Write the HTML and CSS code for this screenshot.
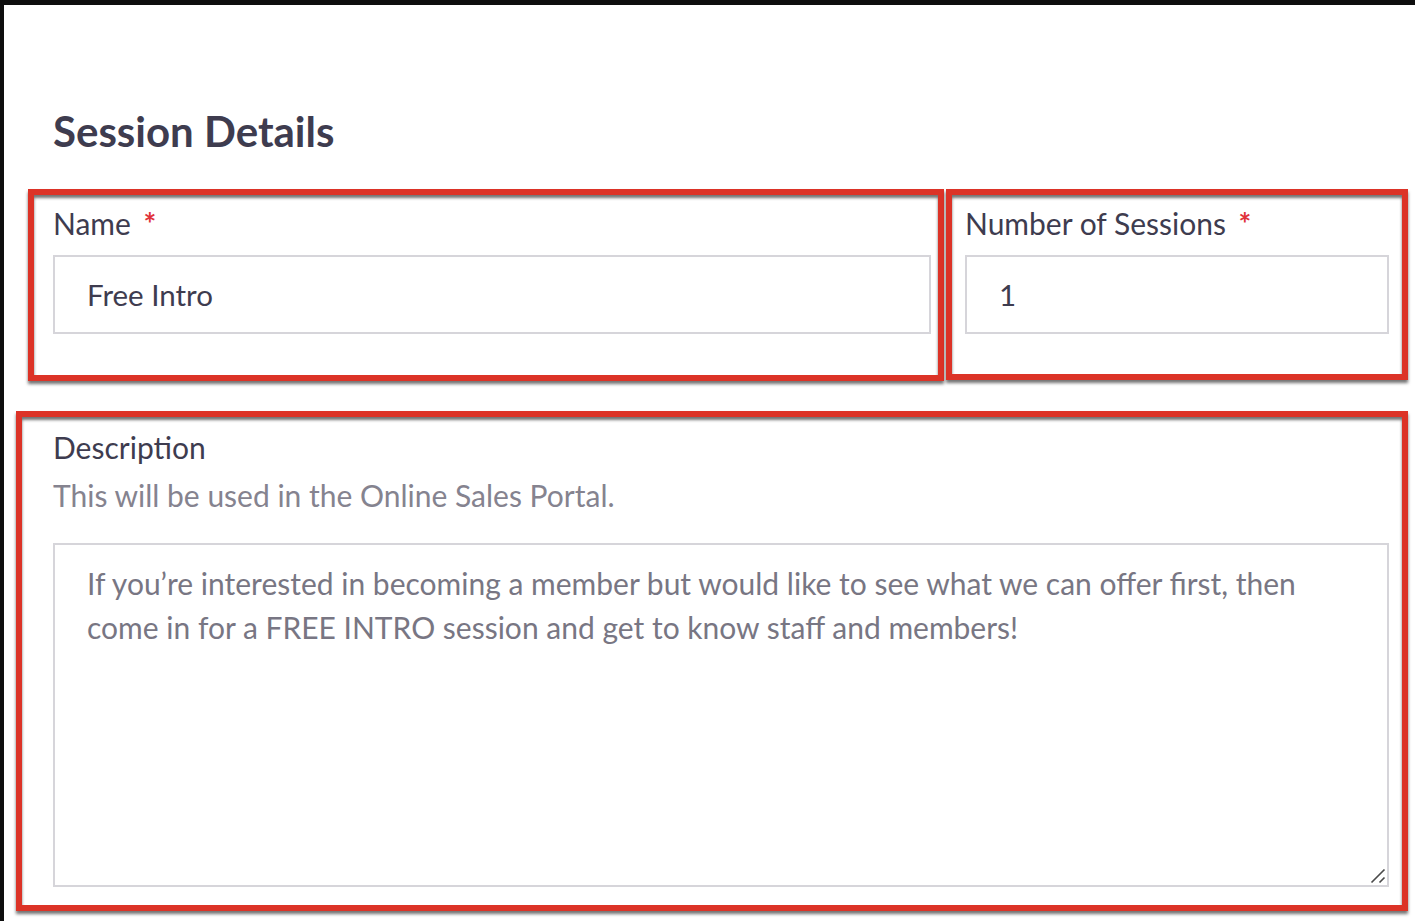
FILE: index.html
```html
<!DOCTYPE html>
<html lang="en">
<head>
<meta charset="utf-8">
<title>Session Details</title>
<link rel="stylesheet" href="styles.css">
</head>
<body>
<main class="page">
  <h1 class="title">Session Details</h1>
  <div class="row">
    <div class="field">
      <label class="label" for="name">Name <span class="req">*</span></label>
      <input class="input" id="name" type="text" value="Free Intro">
    </div>
    <div class="field">
      <label class="label" for="count">Number of Sessions <span class="req">*</span></label>
      <input class="input" id="count" type="text" value="1">
    </div>
  </div>
  <div class="field desc">
    <label class="label" for="desc">Description</label>
    <p class="hint">This will be used in the Online Sales Portal.</p>
    <div class="area-wrap">
      <textarea class="textarea" id="desc">If you’re interested in becoming a member but would like to see what we can offer first, then come in for a FREE INTRO session and get to know staff and members!</textarea>
      <svg class="grip" width="16" height="16" viewBox="0 0 16 16" aria-hidden="true">
        <path d="M1.5 14.5 L14.5 1.5 M9.5 14.5 L14.5 9.5" stroke="#4a4a4a" stroke-width="1.6" fill="none"/>
      </svg>
    </div>
  </div>
</main>
<div class="mark mark-name"></div>
<div class="mark mark-count"></div>
<div class="mark mark-desc"></div>
</body>
</html>
```
FILE: styles.css
```css
* { box-sizing: border-box; }
html, body { margin: 0; padding: 0; }
body {
  position: relative;
  background: #0e0e0e;
  width: 1415px;
  height: 921px;
  overflow: hidden;
  font-family: Lato, "Noto Sans", sans-serif;
  color: #3e3c4f;
}
.page {
  margin: 5px 0 0 4px;
  height: 916px;
  background: #ffffff;
  padding: 98px 26px 0 49px;
}
.title {
  margin: 0 0 44px;
  font-size: 42px;
  line-height: 56px;
  font-weight: 700;
  color: #3e3c4f;
}
.row {
  display: grid;
  grid-template-columns: 878px 424px;
  column-gap: 34px;
}
.field { display: flex; flex-direction: column; }
.label {
  font-size: 30px;
  line-height: 40px;
  color: #3e3c4f;
  margin-bottom: 12px;
}
.req { color: #e0323a; font-weight: 700; margin-left: 5px; }
.input {
  height: 79px;
  border: 2px solid #d6d5da;
  border-radius: 0;
  padding: 0 32px;
  font-family: inherit;
  font-size: 29.5px;
  color: #3e3c4f;
  background: #fff;
  outline: none;
}
.desc { margin-top: 93px; }
.desc .label { margin-bottom: 8px; }
.hint {
  margin: 0 0 28px;
  font-size: 30px;
  line-height: 40px;
  color: #85838f;
}
.area-wrap { position: relative; display: flex; flex-direction: column; }
.textarea {
  height: 344px;
  border: 2px solid #d6d5da;
  border-radius: 0;
  padding: 16px 32px;
  font-family: inherit;
  font-size: 30px;
  line-height: 44px;
  color: #787683;
  background: #fff;
  outline: none;
  resize: none;
}
.grip {
  position: absolute;
  right: 3px;
  bottom: 3px;
}
.mark {
  position: absolute;
  border: 6px solid #dc3327;
  box-shadow: 0 3px 3px rgba(0,0,0,0.55), inset 0 3px 3px rgba(0,0,0,0.55);
  pointer-events: none;
}
.mark-name { left: 28px; top: 189px; width: 916px; height: 192px; }
.mark-count { left: 946px; top: 189px; width: 462px; height: 191px; }
.mark-desc { left: 16px; top: 411px; width: 1392px; height: 500px; }
```
